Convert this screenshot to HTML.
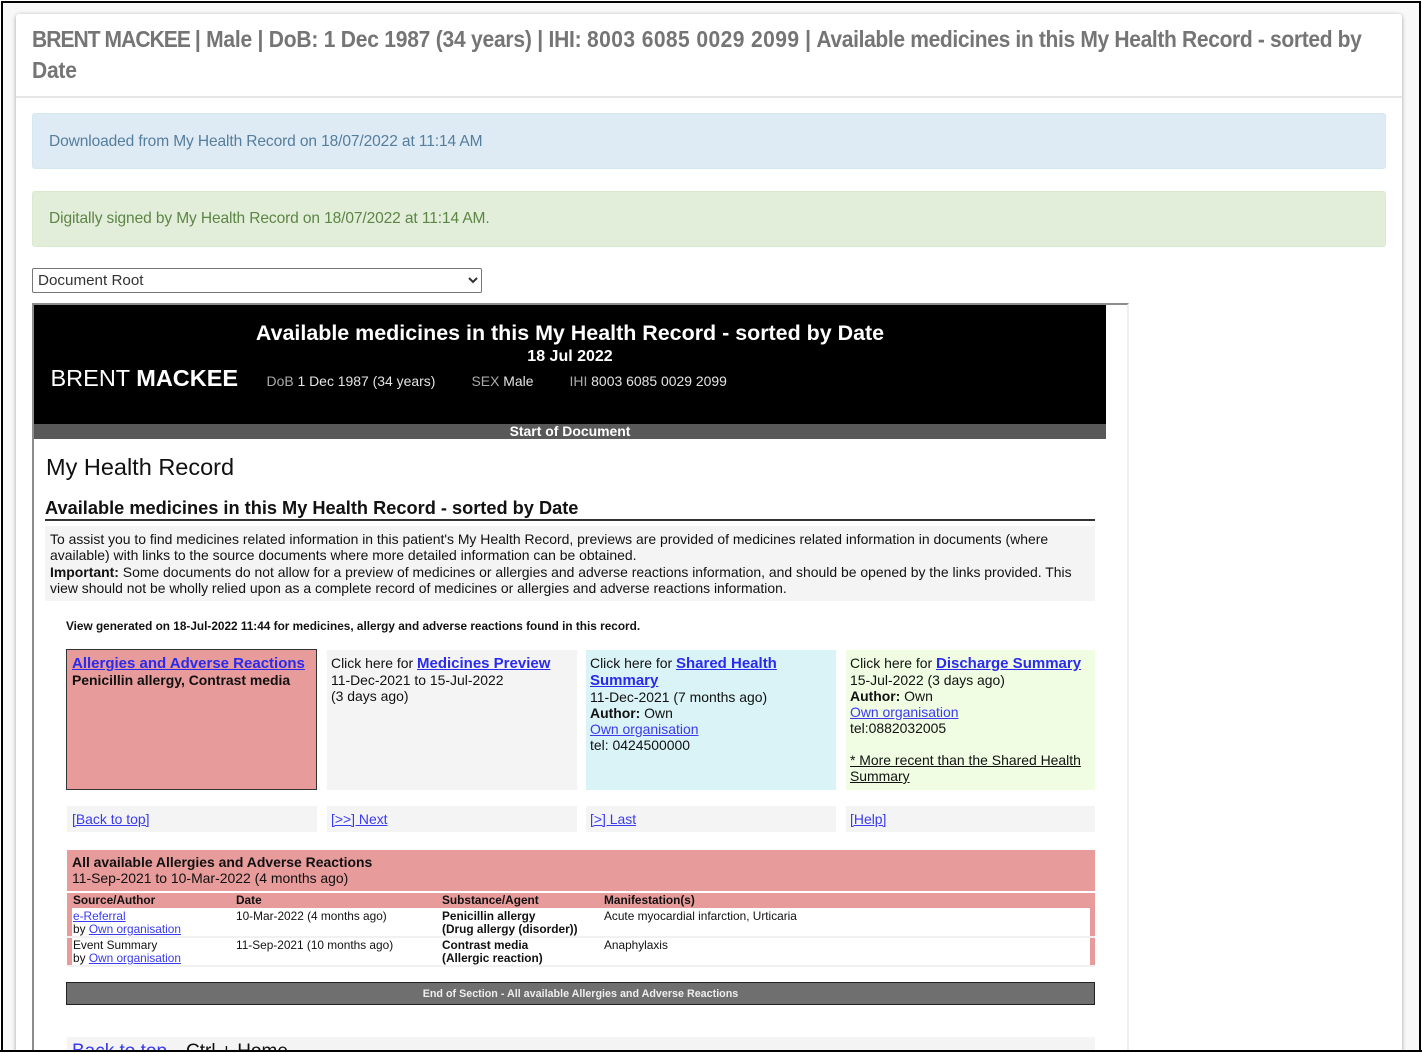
<!DOCTYPE html>
<html><head><meta charset="utf-8"><title>Available medicines</title>
<style>
html,body{margin:0;padding:0;background:#fff}
#p{position:relative;width:1422px;height:1053px;overflow:hidden;background:#fff;font-family:"Liberation Sans",sans-serif;color:#111;filter:blur(.3px)}
#p div{position:absolute;box-sizing:border-box}
.t{white-space:nowrap;line-height:16px;font-size:13.95px}
.b{font-weight:bold}
a{color:#3a3af0;text-decoration:underline}
.lk{font-size:15px;font-weight:bold;color:#2a2aee}
.s{font-size:11.85px;line-height:13px}
</style></head><body>
<div id="p">
<div style="left:1px;top:1px;width:1420px;height:1051px;background:#f8f8f8;border:2px solid #000;border-bottom:0"></div>
<div style="left:16px;top:14px;width:1386px;height:1040px;background:#fff;border-radius:3px 3px 0 0;box-shadow:0 1px 4px rgba(0,0,0,.35)"></div>
<div style="left:16px;top:96px;width:1386px;height:2px;background:#e6e6e6"></div>
<div class="t b" style="left:32px;top:24px;font-size:23px;line-height:31px;color:#757575;letter-spacing:-.25px;transform:scaleX(.914);transform-origin:0 0"><span style="letter-spacing:-1.04px">BRENT MACKEE </span>| Male | DoB: 1 Dec 1987 (34 years) | IHI: <span style="letter-spacing:.45px">8003 6085 0029 2099</span> | <span style="letter-spacing:-.38px">Available medicines in this My Health Record - sorted by</span><br>Date</div>

<div style="left:32px;top:113px;width:1354px;height:56px;background:#deebf5;border:1px solid #d5e7f1;border-radius:3px"></div>
<div class="t" style="left:49px;top:133px;font-size:16px;line-height:18px;color:#557d9c;letter-spacing:-.12px;transform:scaleX(.971);transform-origin:0 0">Downloaded from My Health Record on 18/07/2022 at 11:14 AM</div>
<div style="left:32px;top:191px;width:1354px;height:56px;background:#e2eed9;border:1px solid #d9e9ce;border-radius:3px"></div>
<div class="t" style="left:49px;top:210px;font-size:16px;line-height:18px;color:#5d8546;letter-spacing:-.12px;transform:scaleX(.971);transform-origin:0 0">Digitally signed by My Health Record on 18/07/2022 at 11:14 AM.</div>

<select style="position:absolute;left:32px;top:268px;width:450px;height:24.5px;font:15.2px 'Liberation Sans',sans-serif;color:#333;background:#fff;border:1px solid #767676;border-radius:2px;padding:1px 0 0 1px"><option>Document Root</option></select>

<div style="left:32px;top:303px;width:1097px;height:760px;background:#fff;border-top:2px solid #8c8c8c;border-left:2px solid #8c8c8c;border-right:2px solid #eee"></div>
<div style="left:34px;top:305px;width:1072px;height:119px;background:#000"></div>
<div style="left:34px;top:424px;width:1072px;height:15px;background:#595959"></div>
<div class="t b" style="left:34px;width:1072px;text-align:center;top:321px;font-size:21.45px;line-height:25px;color:#fff">Available medicines in this My Health Record - sorted by Date</div>
<div class="t b" style="left:34px;width:1072px;text-align:center;top:349px;font-size:16px;color:#fff">18 Jul 2022</div>
<div class="t" style="left:50.5px;top:364px;font-size:23.5px;line-height:28px;color:#fff">BRENT <span class="b">MACKEE</span></div>
<div class="t" style="left:266.5px;top:372.5px;color:#e4e4e4"><span style="color:#aaa">DoB</span> 1 Dec 1987 (34 years)</div>
<div class="t" style="left:471.5px;top:372.5px;color:#e4e4e4"><span style="color:#aaa">SEX</span> Male</div>
<div class="t" style="left:569.5px;top:372.5px;color:#e4e4e4"><span style="color:#aaa">IHI</span> 8003 6085 0029 2099</div>
<div class="t b" style="left:34px;width:1072px;text-align:center;top:423px;color:#fff">Start of Document</div>

<div class="t" style="left:46px;top:452px;font-size:23.5px;line-height:30px;color:#111">My Health Record</div>
<div class="t b" style="left:45px;top:497px;font-size:18.22px;line-height:22px;color:#111">Available medicines in this My Health Record - sorted by Date</div>
<div style="left:45px;top:519px;width:1050px;height:2px;background:#333"></div>
<div style="left:45px;top:526px;width:1050px;height:75px;background:#f4f4f4"></div>
<div class="t" style="left:50px;top:531px;line-height:16.33px">To assist you to find medicines related information in this patient's My Health Record, previews are provided of medicines related information in documents (where<br>available) with links to the source documents where more detailed information can be obtained.<br><b>Important:</b> Some documents do not allow for a preview of medicines or allergies and adverse reactions information, and should be opened by the links provided. This<br>view should not be wholly relied upon as a complete record of medicines or allergies and adverse reactions information.</div>
<div class="t b" style="left:66px;top:618px;font-size:11.8px">View generated on 18-Jul-2022 11:44 for medicines, allergy and adverse reactions found in this record.</div>

<div style="left:66px;top:649px;width:251px;height:141px;background:#e79b9b;border:1px solid #333"></div>
<div style="left:327px;top:650px;width:250px;height:140px;background:#f4f4f4"></div>
<div style="left:586px;top:650px;width:250px;height:140px;background:#d9f3f6"></div>
<div style="left:846px;top:650px;width:249px;height:140px;background:#f0fde3"></div>

<div class="t" style="left:72px;top:655px"><a class="lk" href="#">Allergies and Adverse Reactions</a><br><b>Penicillin allergy, Contrast media</b></div>
<div class="t" style="left:331px;top:655px">Click here for <a class="lk" href="#">Medicines Preview</a></div>
<div class="t" style="left:331px;top:672px">11-Dec-2021 to 15-Jul-2022<br>(3 days ago)</div>
<div class="t" style="left:590px;top:655px">Click here for <a class="lk" href="#">Shared Health</a></div>
<div class="t" style="left:590px;top:672px"><a class="lk" href="#">Summary</a></div>
<div class="t" style="left:590px;top:689px">11-Dec-2021 (7 months ago)<br><b>Author:</b> Own<br><a href="#">Own organisation</a><br>tel: 0424500000</div>
<div class="t" style="left:850px;top:655px">Click here for <a class="lk" href="#">Discharge Summary</a></div>
<div class="t" style="left:850px;top:672px">15-Jul-2022 (3 days ago)<br><b>Author:</b> Own<br><a href="#">Own organisation</a><br>tel:0882032005<br><br><u>* More recent than the Shared Health<br>Summary</u></div>

<div style="left:67px;top:806px;width:250px;height:26px;background:#f4f4f4"></div>
<div style="left:327px;top:806px;width:250px;height:26px;background:#f4f4f4"></div>
<div style="left:586px;top:806px;width:250px;height:26px;background:#f4f4f4"></div>
<div style="left:846px;top:806px;width:249px;height:26px;background:#f4f4f4"></div>
<div class="t" style="left:72px;top:811px"><a href="#">[Back to top]</a></div>
<div class="t" style="left:331px;top:811px"><a href="#">[&gt;&gt;] Next</a></div>
<div class="t" style="left:590px;top:811px"><a href="#">[&gt;] Last</a></div>
<div class="t" style="left:850px;top:811px"><a href="#">[Help]</a></div>

<div style="left:67px;top:850px;width:1028px;height:41px;background:#e79b9b"></div>
<div class="t" style="left:72px;top:854px"><b>All available Allergies and Adverse Reactions</b><br>11-Sep-2021 to 10-Mar-2022 (4 months ago)</div>
<div style="left:67px;top:893px;width:1028px;height:15px;background:#e79b9b"></div>
<div class="t b s" style="left:73px;top:894px">Source/Author</div>
<div class="t b s" style="left:236px;top:894px">Date</div>
<div class="t b s" style="left:442px;top:894px">Substance/Agent</div>
<div class="t b s" style="left:604px;top:894px">Manifestation(s)</div>

<div style="left:67px;top:936px;width:1028px;height:2px;background:#f1f1f1"></div>
<div style="left:67px;top:965px;width:1028px;height:2px;background:#f1f1f1"></div>
<div style="left:67px;top:908px;width:5px;height:28px;background:#e79b9b"></div>
<div style="left:67px;top:938px;width:5px;height:27px;background:#e79b9b"></div>
<div style="left:1090px;top:908px;width:5px;height:28px;background:#e79b9b"></div>
<div style="left:1090px;top:938px;width:5px;height:27px;background:#e79b9b"></div>

<div class="t s" style="left:73px;top:910px"><a href="#">e-Referral</a><br>by <a href="#">Own organisation</a></div>
<div class="t s" style="left:236px;top:910px">10-Mar-2022 (4 months ago)</div>
<div class="t s b" style="left:442px;top:910px">Penicillin allergy<br>(Drug allergy (disorder))</div>
<div class="t s" style="left:604px;top:910px">Acute myocardial infarction, Urticaria</div>
<div class="t s" style="left:73px;top:939px">Event Summary<br>by <a href="#">Own organisation</a></div>
<div class="t s" style="left:236px;top:939px">11-Sep-2021 (10 months ago)</div>
<div class="t s b" style="left:442px;top:939px">Contrast media<br>(Allergic reaction)</div>
<div class="t s" style="left:604px;top:939px">Anaphylaxis</div>

<div style="left:66px;top:982px;width:1029px;height:23px;background:#6f6f6f;border:1px solid #222"></div>
<div class="t b" style="left:66px;width:1029px;text-align:center;top:986px;font-size:10.74px;color:#eee">End of Section - All available Allergies and Adverse Reactions</div>

<div style="left:67px;top:1037px;width:1028px;height:20px;background:#f4f4f4"></div>
<div class="t" style="left:72px;top:1042px;font-size:19px;line-height:20px"><a href="#">Back to top</a></div>
<div class="t" style="left:186px;top:1042px;font-size:19px;line-height:20px">Ctrl + Home</div>

<div style="left:0;top:1050px;width:1422px;height:3px;background:#000;border-bottom:1px solid #fff"></div>
</div>
</body></html>
